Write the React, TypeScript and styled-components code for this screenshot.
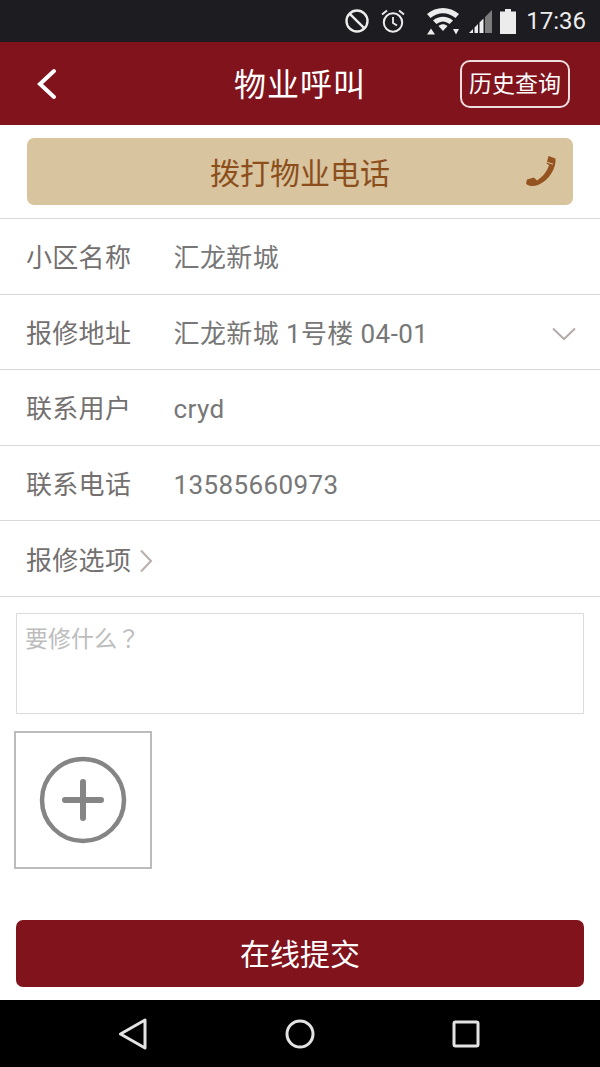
import React from 'react';
import styled, {createGlobalStyle} from 'styled-components';

const GlobalStyle = createGlobalStyle`
html, body {
  margin: 0;
  padding: 0;
  background: #fff;
}
* { box-sizing: border-box; }
`;

const Page = styled.div`
width: 600px;
height: 1067px;
display: flex;
flex-direction: column;
overflow: hidden;
background: #fff;
font-family: "Roboto", "Noto Sans CJK SC", sans-serif;
`;

const StatusBar = styled.div`
height: 42px;
background: #1c1c21;
color: #ececec;
display: flex;
align-items: center;
justify-content: flex-end;
padding-right: 14px;
`;

const StatusIcon = styled.svg<{$gap?: number}>`
display: block;
margin-right: ${p => p.$gap ?? 0}px;
`;

const Clock = styled.span`
font-size: 24px;
line-height: 42px;
margin-left: 10px;
`;

const Header = styled.div`
height: 83px;
background: #80131c;
display: flex;
align-items: center;
position: relative;
`;

const BackButton = styled.svg`
display: block;
margin-left: 36px;
`;

const Title = styled.div`
position: absolute;
left: 0;
right: 0;
top: 2px;
text-align: center;
color: #fff;
font-size: 32px;
line-height: 83px;
letter-spacing: 1px;
pointer-events: none;
`;

const HistoryButton = styled.div`
margin-left: auto;
margin-right: 30px;
width: 110px;
height: 48px;
border: 2px solid #eeddde;
border-radius: 10px;
color: #fff;
font-size: 23px;
line-height: 46px;
text-align: center;
`;

const CallBar = styled.div`
height: 94px;
padding: 13px 27px;
border-bottom: 1px solid #d9d9d9;
`;

const CallButton = styled.div`
height: 67px;
border-radius: 7px;
background: #d8c49f;
color: #8c4f1c;
font-size: 30px;
line-height: 71px;
text-align: center;
position: relative;
`;

const PhoneIcon = styled.svg`
position: absolute;
right: 15px;
top: 17px;
`;

const Row = styled.div`
height: 75.6px;
display: flex;
align-items: center;
padding: 4px 24px 0 26px;
border-bottom: 1px solid #d9d9d9;
font-size: 26px;
line-height: 36px;
color: #777;
`;

const Label = styled.span`
width: 148px;
flex: none;
color: #747070;
letter-spacing: 0.3px;
`;

const OptionLabel = styled.span`
color: #747070;
letter-spacing: 0.3px;
margin-right: 2px;
`;

const Value = styled.span`
flex: 1;
margin-left: -0.5px;
letter-spacing: 0.4px;
`;

const NoteBox = styled.div`
height: 101px;
margin: 16px 16px 0;
border: 1px solid #dcdcdc;
padding: 5px 8px;
color: #bdbdbd;
font-size: 23px;
line-height: 36px;
`;

const QuestionMark = styled.span`
font-family: "Noto Sans CJK TC", sans-serif;
`;

const AddPhoto = styled.div`
width: 138px;
height: 138px;
margin: 17px 0 0 14px;
border: 2px solid #bcbcbc;
display: flex;
align-items: center;
justify-content: center;
`;

const SubmitButton = styled.div`
height: 67px;
margin: 51px 16px 0;
border-radius: 7px;
background: #80131c;
color: #fff;
font-size: 30px;
line-height: 69px;
text-align: center;
`;

const NavBar = styled.div`
height: 67px;
margin-top: auto;
background: #000;
display: flex;
align-items: center;
padding-left: 118px;
gap: 137px;
`;

const rows = [
  {label: '小区名称', value: '汇龙新城'},
  {label: '报修地址', value: '汇龙新城 1号楼 04-01', select: true},
  {label: '联系用户', value: 'cryd'},
  {label: '联系电话', value: '13585660973'},
];

export default function App() {
  return (
    <Page>
      <GlobalStyle />
      <StatusBar>
        <StatusIcon width="26" height="26" viewBox="0 0 26 26" $gap={10}>
          <circle cx="13" cy="13" r="10.5" fill="none" stroke="#ececec" strokeWidth="2.4" />
          <path d="M5.8 5.8L20.2 20.2" stroke="#ececec" strokeWidth="2.4" />
        </StatusIcon>
        <StatusIcon width="26" height="26" viewBox="0 0 26 26" $gap={20}>
          <circle cx="13" cy="14.5" r="9.2" fill="none" stroke="#ececec" strokeWidth="2" />
          <path d="M13 9v6l4 2.5" fill="none" stroke="#ececec" strokeWidth="1.8" />
          <path d="M2 6.5L7 2.5M24 6.5L19 2.5" stroke="#ececec" strokeWidth="2" />
        </StatusIcon>
        <StatusIcon width="34" height="28" viewBox="0 0 34 28" $gap={8}>
          <path d="M1 7C10-1 24-1 33 7L29.5 11C22 4.5 12 4.5 4.5 11Z" fill="#ececec" />
          <path d="M7 13.5C13 8.5 21 8.5 27 13.5L23.5 17C19 13.5 15 13.5 10.500 17Z" fill="#ececec" />
          <path d="M12.500 19C15.500 16.500 18.500 16.500 21.500 19L17 24Z" fill="#ececec" />
          <path d="M1 27.500L5 21.500L9 27.500ZM27 22H33L30 27.500Z" fill="#ececec" />
        </StatusIcon>
        <StatusIcon width="25" height="26" viewBox="0 0 25 26" $gap={7}>
          <path d="M1 25L5 21V25ZM6.500 25V19.500L10 16V25ZM11.500 25V14.500L15.500 10.500V25Z" fill="#ececec" />
          <path d="M17 25V9L24 2V25Z" fill="#7c7c7c" />
        </StatusIcon>
        <StatusIcon width="16" height="25" viewBox="0 0 16 25">
          <path d="M5 0H11V2.500H16V25H0V2.500H5Z" fill="#ececec" />
        </StatusIcon>
        <Clock>17:36</Clock>
      </StatusBar>

      <Header>
        <BackButton width="22" height="32" viewBox="0 0 22 32">
          <path d="M18 3L4 16L18 29" fill="none" stroke="#fff" strokeWidth="4" strokeLinecap="round" />
        </BackButton>
        <Title>物业呼叫</Title>
        <HistoryButton>历史查询</HistoryButton>
      </Header>

      <CallBar>
        <CallButton>
          拨打物业电话
          <PhoneIcon width="33" height="33" viewBox="0 0 33 33">
            <path d="M23.500 1L30.500 3.500C31.500 12 25 25 13 30C9 31.800 3.500 31.500 1 28.500L2 24.500L9 22.500L12 25.500C17.500 22 22.500 16 24 10L21.500 8.500Z" fill="#94531f" />
            <path d="M21.500 7L28 9.200" stroke="#d8c49f" strokeWidth="1" />
          </PhoneIcon>
        </CallButton>
      </CallBar>

      {rows.map(row => (
        <Row key={row.label}>
          <Label>{row.label}</Label>
          <Value>{row.value}</Value>
          {row.select && (
            <svg width="24" height="14" viewBox="0 0 24 14">
              <path d="M1 1.500L12 12L23 1.500" fill="none" stroke="#b5abab" strokeWidth="2" />
            </svg>
          )}
        </Row>
      ))}
      <Row>
        <OptionLabel>报修选项</OptionLabel>
        <svg width="20" height="24" viewBox="0 0 20 24">
          <path d="M8 1.500L18 12L8 22.500" fill="none" stroke="#b8aeaa" strokeWidth="2" />
        </svg>
      </Row>

      <NoteBox>要修什么<QuestionMark>？</QuestionMark></NoteBox>
      <AddPhoto>
        <svg width="88" height="88" viewBox="0 0 88 88">
          <circle cx="44" cy="44" r="41" fill="none" stroke="#858585" strokeWidth="4.500" />
          <path d="M26 44H62M44 26V62" stroke="#858585" strokeWidth="6" strokeLinecap="round" />
        </svg>
      </AddPhoto>
      <SubmitButton>在线提交</SubmitButton>

      <NavBar>
        <svg width="30" height="32" viewBox="0 0 30 32">
          <path d="M2.500 16L27 2V30Z" fill="none" stroke="#e3e3e3" strokeWidth="3" strokeLinejoin="round" />
        </svg>
        <svg width="30" height="30" viewBox="0 0 30 30">
          <circle cx="15" cy="15" r="13" fill="none" stroke="#e3e3e3" strokeWidth="3" />
        </svg>
        <svg width="28" height="28" viewBox="0 0 28 28">
          <rect x="2" y="2" width="24" height="24" rx="1.500" fill="none" stroke="#e3e3e3" strokeWidth="3" />
        </svg>
      </NavBar>
    </Page>
  );
}
